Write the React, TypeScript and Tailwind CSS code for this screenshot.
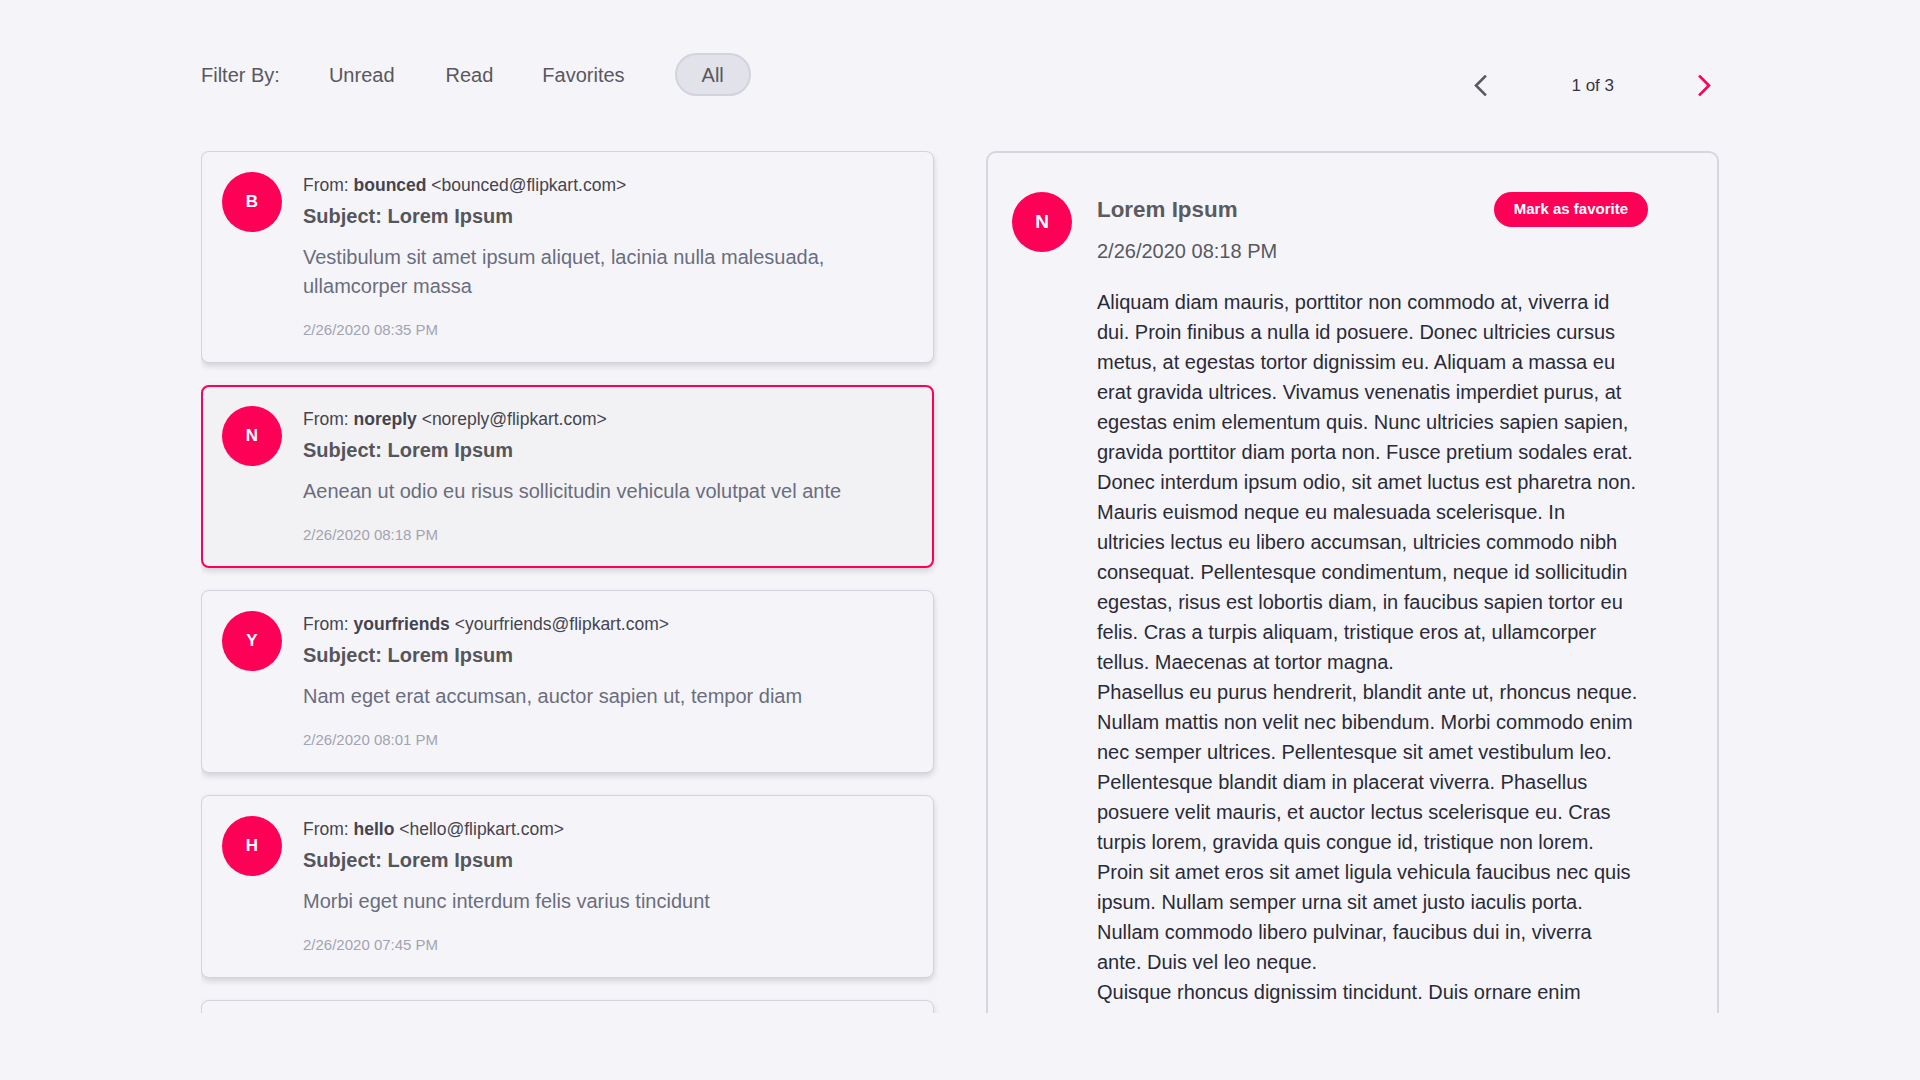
import React from "react";

type Mail = {
  letter: string;
  name: string;
  email: string;
  preview: string;
  date: string;
  selected?: boolean;
};

const mails: Mail[] = [
  {
    letter: "B",
    name: "bounced",
    email: "bounced@flipkart.com",
    preview: "Vestibulum sit amet ipsum aliquet, lacinia nulla malesuada, ullamcorper massa",
    date: "2/26/2020 08:35 PM",
  },
  {
    letter: "N",
    name: "noreply",
    email: "noreply@flipkart.com",
    preview: "Aenean ut odio eu risus sollicitudin vehicula volutpat vel ante",
    date: "2/26/2020 08:18 PM",
    selected: true,
  },
  {
    letter: "Y",
    name: "yourfriends",
    email: "yourfriends@flipkart.com",
    preview: "Nam eget erat accumsan, auctor sapien ut, tempor diam",
    date: "2/26/2020 08:01 PM",
  },
  {
    letter: "H",
    name: "hello",
    email: "hello@flipkart.com",
    preview: "Morbi eget nunc interdum felis varius tincidunt",
    date: "2/26/2020 07:45 PM",
  },
  {
    letter: "S",
    name: "support",
    email: "support@flipkart.com",
    preview: "Sed consequat tortor at lacus fermentum, id cursus nisi pretium",
    date: "2/26/2020 07:30 PM",
  },
];

function Card({ m }: { m: Mail }) {
  return (
    <div
      className={
        m.selected
          ? "flex rounded-[8px] border-2 border-[#ff0057] bg-[#f2f2f4] px-[19px] pt-[18px] pb-[20px] shadow-[0_3px_6px_rgba(0,0,0,0.14)]"
          : "flex rounded-[8px] border border-[#d3d3de] bg-[#f5f5f9] px-[20px] pt-[19px] pb-[21px] shadow-[0_3px_6px_rgba(0,0,0,0.14)]"
      }
    >
      <div className="mt-[1px] flex h-[60px] w-[60px] shrink-0 items-center justify-center rounded-full bg-[#ff0057] text-[17px] font-bold text-white">
        {m.letter}
      </div>
      <div className="ml-[21px] flex flex-col">
        <div className="text-[17.5px] leading-[28px] text-[#444450]">
          From: <span className="font-bold">{m.name}</span> &lt;{m.email}&gt;
        </div>
        <div className="mt-[2px] text-[20px] font-bold leading-[30px] text-[#55555c]">Subject: Lorem Ipsum</div>
        <div className="mt-[12px] text-[20px] leading-[29px] text-[#6a6d7e]">{m.preview}</div>
        <div className="mt-[18px] text-[15px] leading-[22px] text-[#a2a3b1]">{m.date}</div>
      </div>
    </div>
  );
}

function Chevron({ dir, color }: { dir: "left" | "right"; color: string }) {
  return (
    <svg width="13" height="21" viewBox="0 0 13 21" fill="none">
      <path
        d={dir === "left" ? "M11 1.5 L2 10.5 L11 19.5" : "M2 1.5 L11 10.5 L2 19.5"}
        stroke={color}
        strokeWidth="2.6"
        strokeLinecap="square"
        strokeLinejoin="miter"
      />
    </svg>
  );
}

export default function App() {
  return (
    <div className="h-[1080px] w-[1920px] overflow-hidden bg-[#f4f4f9] font-['Liberation_Sans',Arial,sans-serif]">
      <div className="mx-auto w-[1518px]">
        <div className="mt-[53px] flex h-[43px] items-start justify-between">
          <div className="flex h-[43px] items-center text-[20px] text-[#58585f]">
            <span>Filter By:</span>
            <span className="ml-[49px]">Unread</span>
            <span className="ml-[51px]">Read</span>
            <span className="ml-[49px]">Favorites</span>
            <span className="ml-[50px] flex h-[43px] items-center rounded-full border-2 border-[#d2d3dd] bg-[#e1e2ea] px-[25px]">
              All
            </span>
          </div>
          <div className="mr-[8px] mt-[11px] flex h-[43px] items-center">
            <Chevron dir="left" color="#5a5a60" />
            <span className="mx-[84px] text-[17px] text-[#36364a]">1 of 3</span>
            <Chevron dir="right" color="#ff0057" />
          </div>
        </div>

        <div className="mt-[55px] grid h-[862px] grid-cols-2 gap-[52px] overflow-hidden">
          <div className="flex flex-col gap-[22px]">
            {mails.map((m) => (
              <Card key={m.email} m={m} />
            ))}
          </div>
          <div className="rounded-t-[10px] border-2 border-b-0 border-[#d6d6e0] bg-[#f5f5f9]">
            <div className="flex pl-[24px] pt-[39px]">
              <div className="flex h-[60px] w-[60px] shrink-0 items-center justify-center rounded-full bg-[#ff0057] text-[19px] font-bold text-white">
                N
              </div>
              <div className="ml-[25px] flex w-[551px] flex-col">
                <div className="flex items-start justify-between">
                  <div className="mt-[3px] text-[22.4px] font-bold leading-[30px] text-[#5a5a60]">Lorem Ipsum</div>
                  <div className="flex h-[35px] items-center rounded-full bg-[#ff0057] px-[20px] text-[15px] font-bold text-white">
                    Mark as favorite
                  </div>
                </div>
                <div className="mt-[9px] text-[20px] leading-[30px] text-[#58585f]">2/26/2020 08:18 PM</div>
                <div className="mt-[21px] text-[20px] leading-[30px] text-[#2a2a38]">
                  <p className="w-[540px]">
                    Aliquam diam mauris, porttitor non commodo at, viverra id dui. Proin finibus a nulla id posuere. Donec
                    ultricies cursus metus, at egestas tortor dignissim eu. Aliquam a massa eu erat gravida ultrices.
                    Vivamus venenatis imperdiet purus, at egestas enim elementum quis. Nunc ultricies sapien sapien,
                    gravida porttitor diam porta non. Fusce pretium sodales erat. Donec interdum ipsum odio, sit amet
                    luctus est pharetra non. Mauris euismod neque eu malesuada scelerisque. In ultricies lectus eu libero
                    accumsan, ultricies commodo nibh consequat. Pellentesque condimentum, neque id sollicitudin egestas,
                    risus est lobortis diam, in faucibus sapien tortor eu felis. Cras a turpis aliquam, tristique eros
                    at, ullamcorper tellus. Maecenas at tortor magna.
                  </p>
                  <p className="w-[542px]">
                    Phasellus eu purus hendrerit, blandit ante ut, rhoncus neque. Nullam mattis non velit nec bibendum.
                    Morbi commodo enim nec semper ultrices. Pellentesque sit amet vestibulum leo. Pellentesque blandit
                    diam in placerat viverra. Phasellus posuere velit mauris, et auctor lectus scelerisque eu. Cras
                    turpis lorem, gravida quis congue id, tristique non lorem. Proin sit amet eros sit amet ligula
                    vehicula faucibus nec quis ipsum. Nullam semper urna sit amet justo iaculis porta. Nullam commodo
                    libero pulvinar, faucibus dui in, viverra ante. Duis vel leo neque.
                  </p>
                  <p className="w-[540px]">
                    Quisque rhoncus dignissim tincidunt. Duis ornare enim vestibulum lacus rutrum, in pulvinar felis
                    gravida. Sed id metus at nunc tincidunt facilisis. Vivamus non turpis a mauris porta luctus.
                  </p>
                </div>
              </div>
            </div>
          </div>
        </div>
      </div>
    </div>
  );
}
